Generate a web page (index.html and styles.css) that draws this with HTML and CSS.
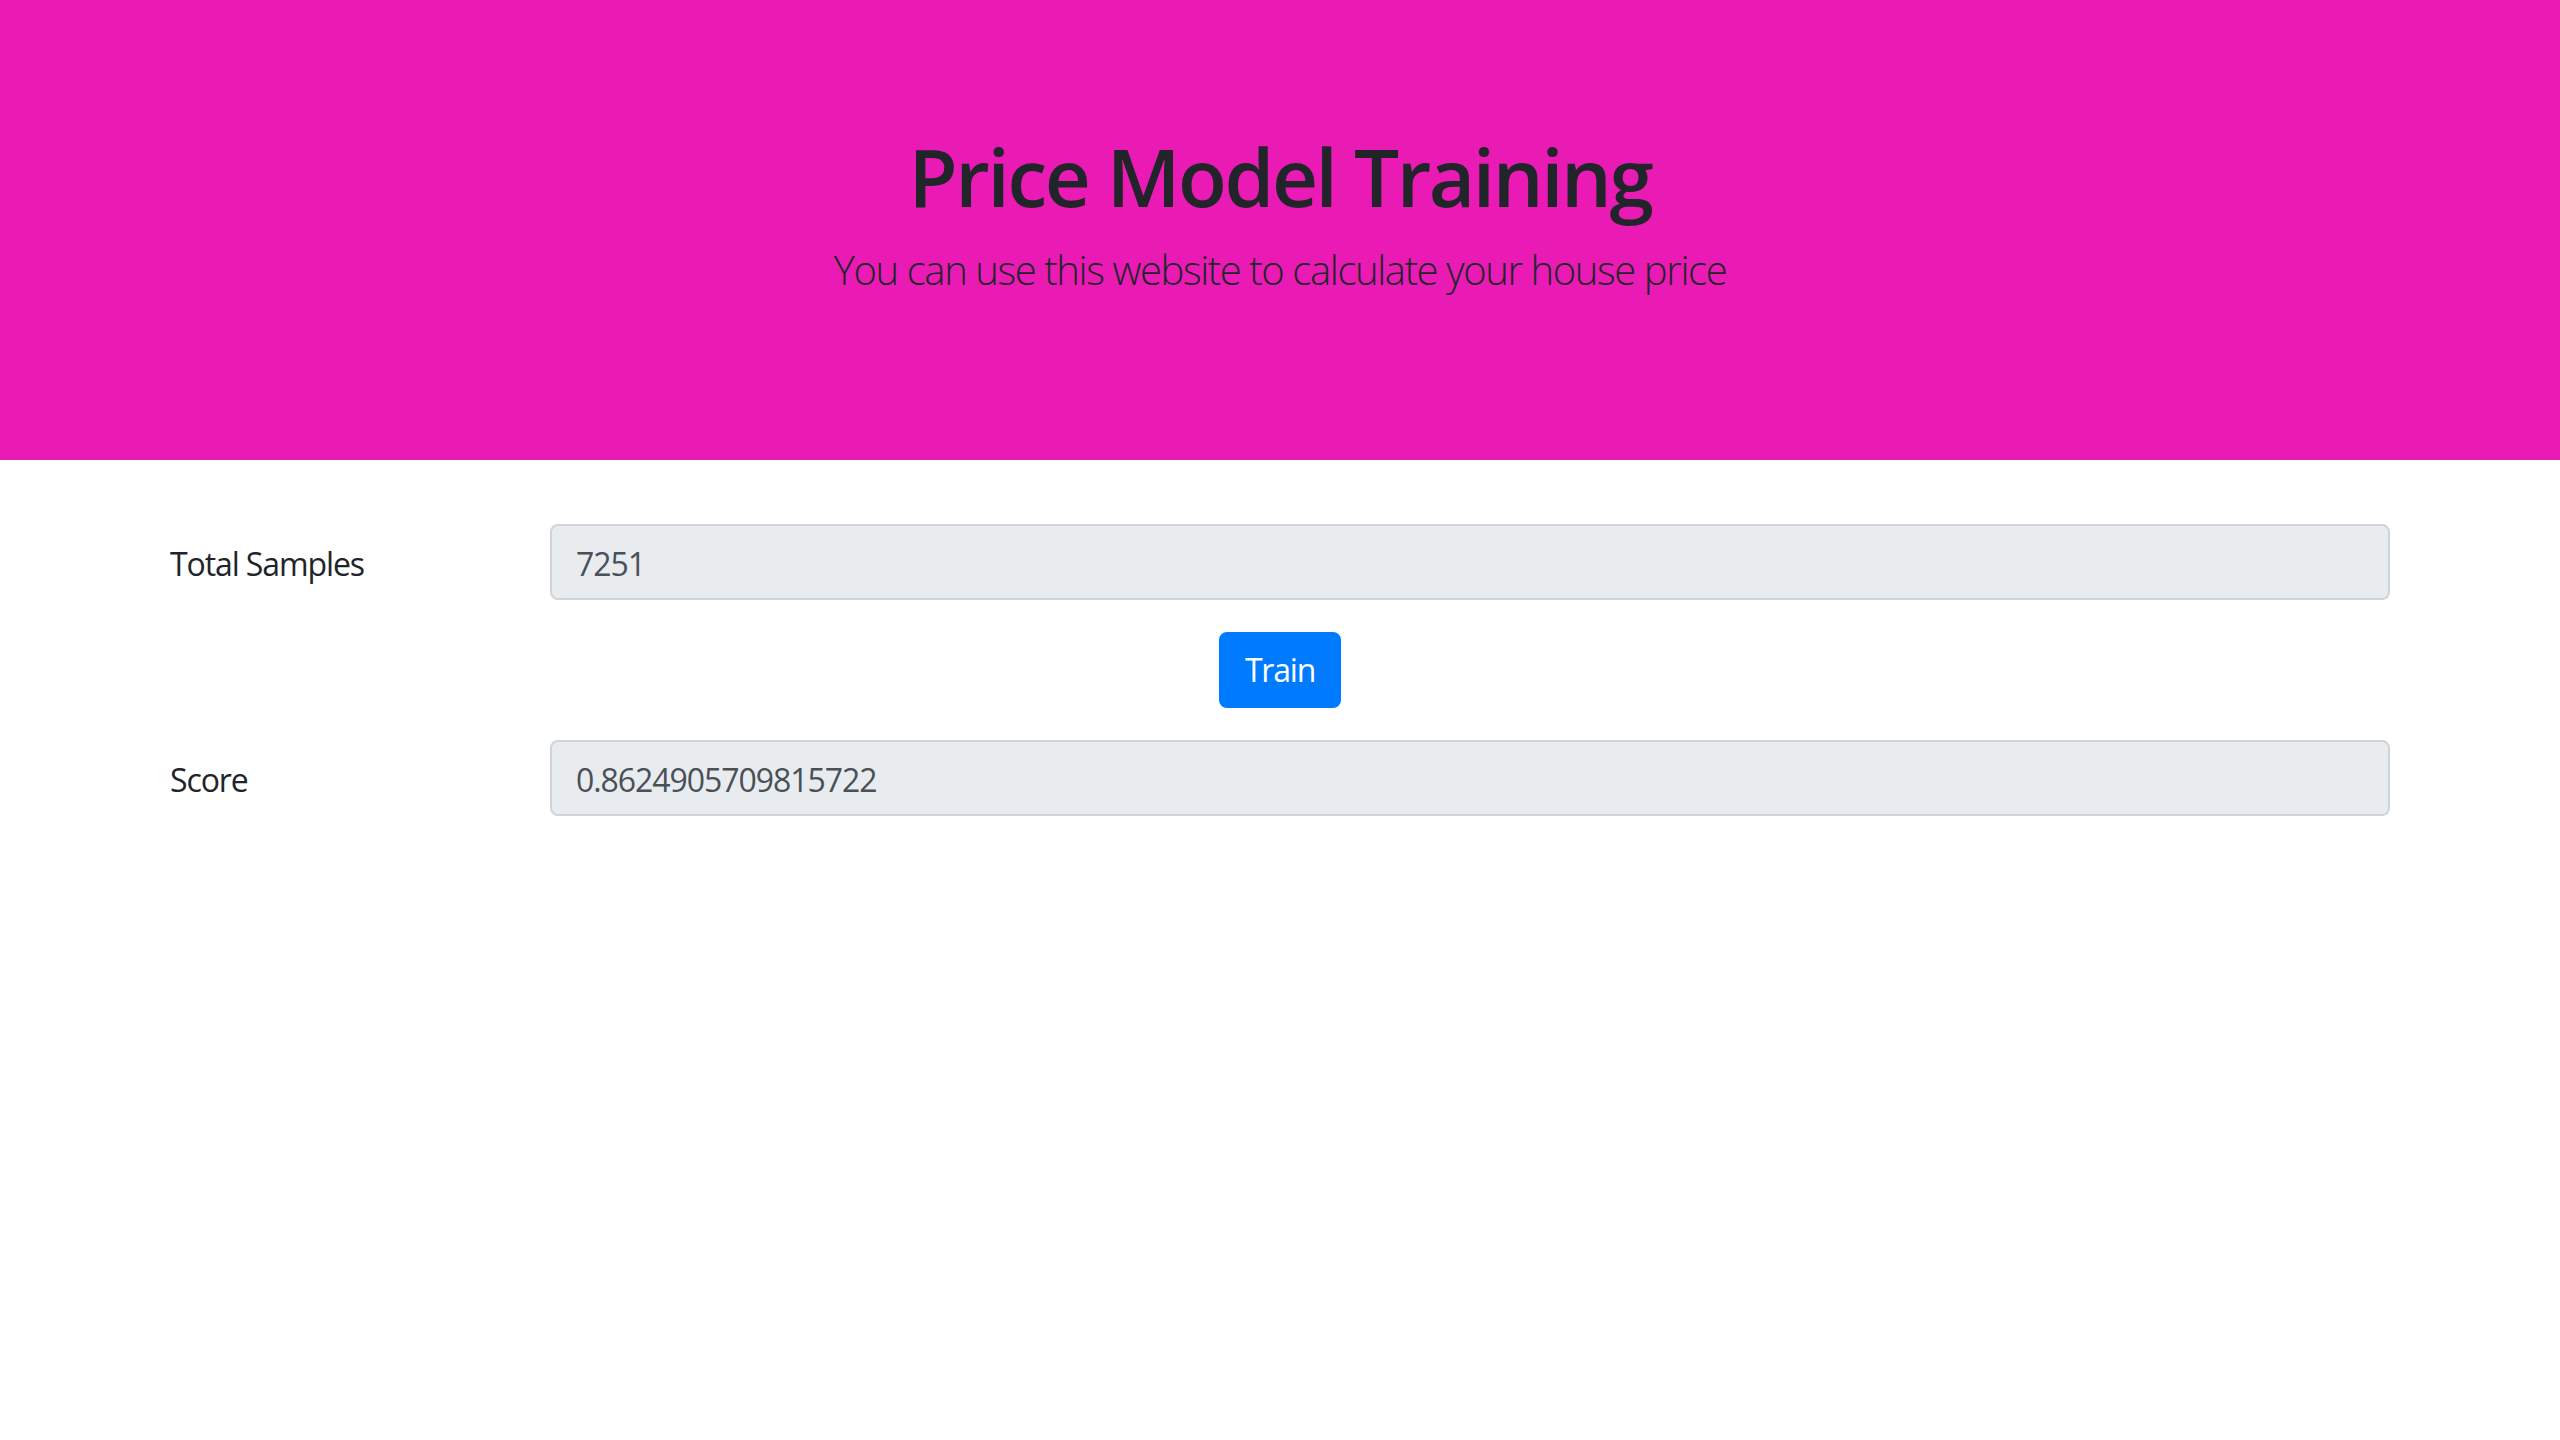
FILE: index.html
```html
<!DOCTYPE html>
<html lang="en">
<head>
<meta charset="utf-8">
<title>Price Model Training</title>
<link rel="stylesheet" href="styles.css">
</head>
<body>
<header class="jumbotron">
  <h1 class="title">Price Model Training</h1>
  <p class="lead">You can use this website to calculate your house price</p>
</header>
<main class="container">
  <div class="form-row">
    <label class="form-label">Total Samples</label>
    <div class="form-field"><input class="form-input" type="text" value="7251" readonly></div>
  </div>
  <div class="button-row">
    <button class="btn-primary" type="button">Train</button>
  </div>
  <div class="form-row">
    <label class="form-label">Score</label>
    <div class="form-field"><input class="form-input" type="text" value="0.8624905709815722" readonly></div>
  </div>
</main>
</body>
</html>
```
FILE: styles.css
```css
* { box-sizing: border-box; }
html, body { margin: 0; padding: 0; }
body {
  font-family: "Open Sans", "Noto Sans", "Liberation Sans", sans-serif;
  font-size: 32px;
  line-height: 1.5;
  color: #212529;
  background: #fff;
}
.jumbotron {
  background: #e91bb4;
  padding: 128px 64px;
  margin: 0 0 64px 0;
  text-align: center;
}
.title {
  margin: 0 0 16px 0;
  font-size: 80px;
  font-weight: 600;
  line-height: 96px;
  letter-spacing: -2.4px;
}
.lead {
  margin: 0 0 32px 0;
  font-size: 40px;
  font-weight: 300;
  line-height: 60px;
  letter-spacing: -1.4px;
}
.container {
  width: 2280px;
  margin: 0 auto;
  padding: 0 30px;
}
.form-row {
  display: flex;
  align-items: flex-start;
  margin-bottom: 32px;
}
.form-label {
  width: 380px;
  flex: none;
  padding: 16px 30px 12px 0;
  line-height: 48px;
  font-size: 32px;
  letter-spacing: -1.1px;
}
.form-field { flex: 1; }
.form-input {
  display: block;
  width: 100%;
  height: 76px;
  padding: 13px 24px 11px;
  font-family: inherit;
  font-size: 32px;
  line-height: 48px;
  color: #495057;
  background: #e9ecef;
  border: 2px solid #ced4da;
  border-radius: 8px;
  letter-spacing: -1.05px;
  outline: none;
}
.button-row {
  display: flex;
  justify-content: center;
  margin-bottom: 32px;
}
.btn-primary {
  display: block;
  height: 76px;
  padding: 12px 24px;
  font-family: inherit;
  font-size: 32px;
  line-height: 48px;
  color: #fff;
  background: #007bff;
  border: 2px solid #007bff;
  border-radius: 8px;
  letter-spacing: -1.2px;
}
```
